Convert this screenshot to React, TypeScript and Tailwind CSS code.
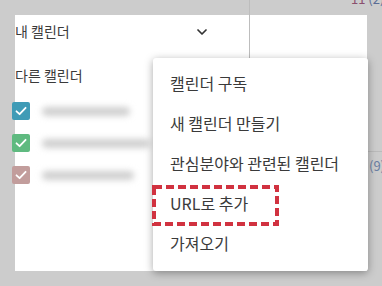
import { ChevronDown } from "lucide-react";

const menuItems = [
  "캘린더 구독",
  "새 캘린더 만들기",
  "관심분야와 관련된 캘린더",
  "URL로 추가",
  "가져오기",
];

const calendars = [
  { color: "bg-[#3f9bb6]", blur: "w-[88px]" },
  { color: "bg-[#5fba80]", blur: "w-[108px]" },
  { color: "bg-[#c29d9c]", blur: "w-[92px]" },
];

function Check() {
  return (
    <svg width="12" height="12" viewBox="0 0 12 12" fill="none">
      <path
        d="M1.5 6.3 L4.6 9.2 L10.6 2.8"
        stroke="white"
        strokeWidth="1.8"
        strokeLinecap="round"
        strokeLinejoin="round"
      />
    </svg>
  );
}

const App = () => {
  return (
    <div className="relative h-[286px] w-[382px] overflow-hidden bg-[#cccccc] font-['Noto_Sans_CJK_KR','Noto_Sans',sans-serif] text-[#3a3a3a]">
      {/* calendar grid behind the backdrop */}
      <div className="absolute left-[249px] top-0 h-[58px] w-px bg-[#bdbdbd]" />
      <div className="absolute right-0 top-[151px] h-px w-[15px] bg-[#bbbbbb]" />
      <div className="absolute left-[351px] top-[-9px] whitespace-nowrap text-[13px] leading-[16px]">
        <span className="text-[#8a4f6e]">11</span>{" "}
        <span className="text-[#5a6c95]">(2)</span>
      </div>
      <div className="absolute left-[369px] top-[158px] whitespace-nowrap text-[13px] leading-[16px] text-[#6b7fa3]">
        (9)
      </div>

      <div className="pl-[15px] pt-[15px]">
        {/* sidebar panel */}
        <div className="flex h-[256px] w-[352px] flex-col bg-white">
          <div className="flex h-[33px] items-center text-[14px]">
            <span className="w-[179px]">내 캘린더</span>
            <ChevronDown size={16} strokeWidth={2.6} className="text-[#333]" />
          </div>
          <div className="mt-[18px] flex h-[18px] items-center text-[14px]">
            다른 캘린더
          </div>
          <div className="-ml-[3px] mt-[18px] flex flex-col gap-[14px]">
            {calendars.map((c, i) => (
              <div key={i} className="flex h-[18px] items-center">
                <div
                  className={`flex h-[18px] w-[18px] items-center justify-center rounded-[2px] ${c.color}`}
                >
                  <Check />
                </div>
                <div className="ml-[12px] flex h-[14px] items-center">
                  <div
                    className={`h-[9px] ${c.blur} rounded-full bg-[#cfcfcf] blur-[3px]`}
                  />
                </div>
              </div>
            ))}
          </div>
        </div>
      </div>

      {/* dropdown menu */}
      <div className="absolute left-[153px] top-[58px] flex h-[213px] w-[215px] flex-col rounded-[3px] bg-white pt-[5px] shadow-[0_2px_8px_rgba(0,0,0,0.35)]">
        {menuItems.map((item) => (
          <div
            key={item}
            className="flex h-[40px] items-center pl-[17px] text-[16px] text-[#3a3a3a]"
          >
            {item}
          </div>
        ))}
      </div>

      {/* highlight */}
      <svg
        className="absolute left-[152px] top-[185px]"
        width="127"
        height="41"
        viewBox="0 0 127 41"
      >
        <rect
          x="2"
          y="2"
          width="123"
          height="37"
          fill="none"
          stroke="#d13240"
          strokeWidth="4"
          strokeDasharray="8 4"
        />
      </svg>
    </div>
  );
};
export default App;
